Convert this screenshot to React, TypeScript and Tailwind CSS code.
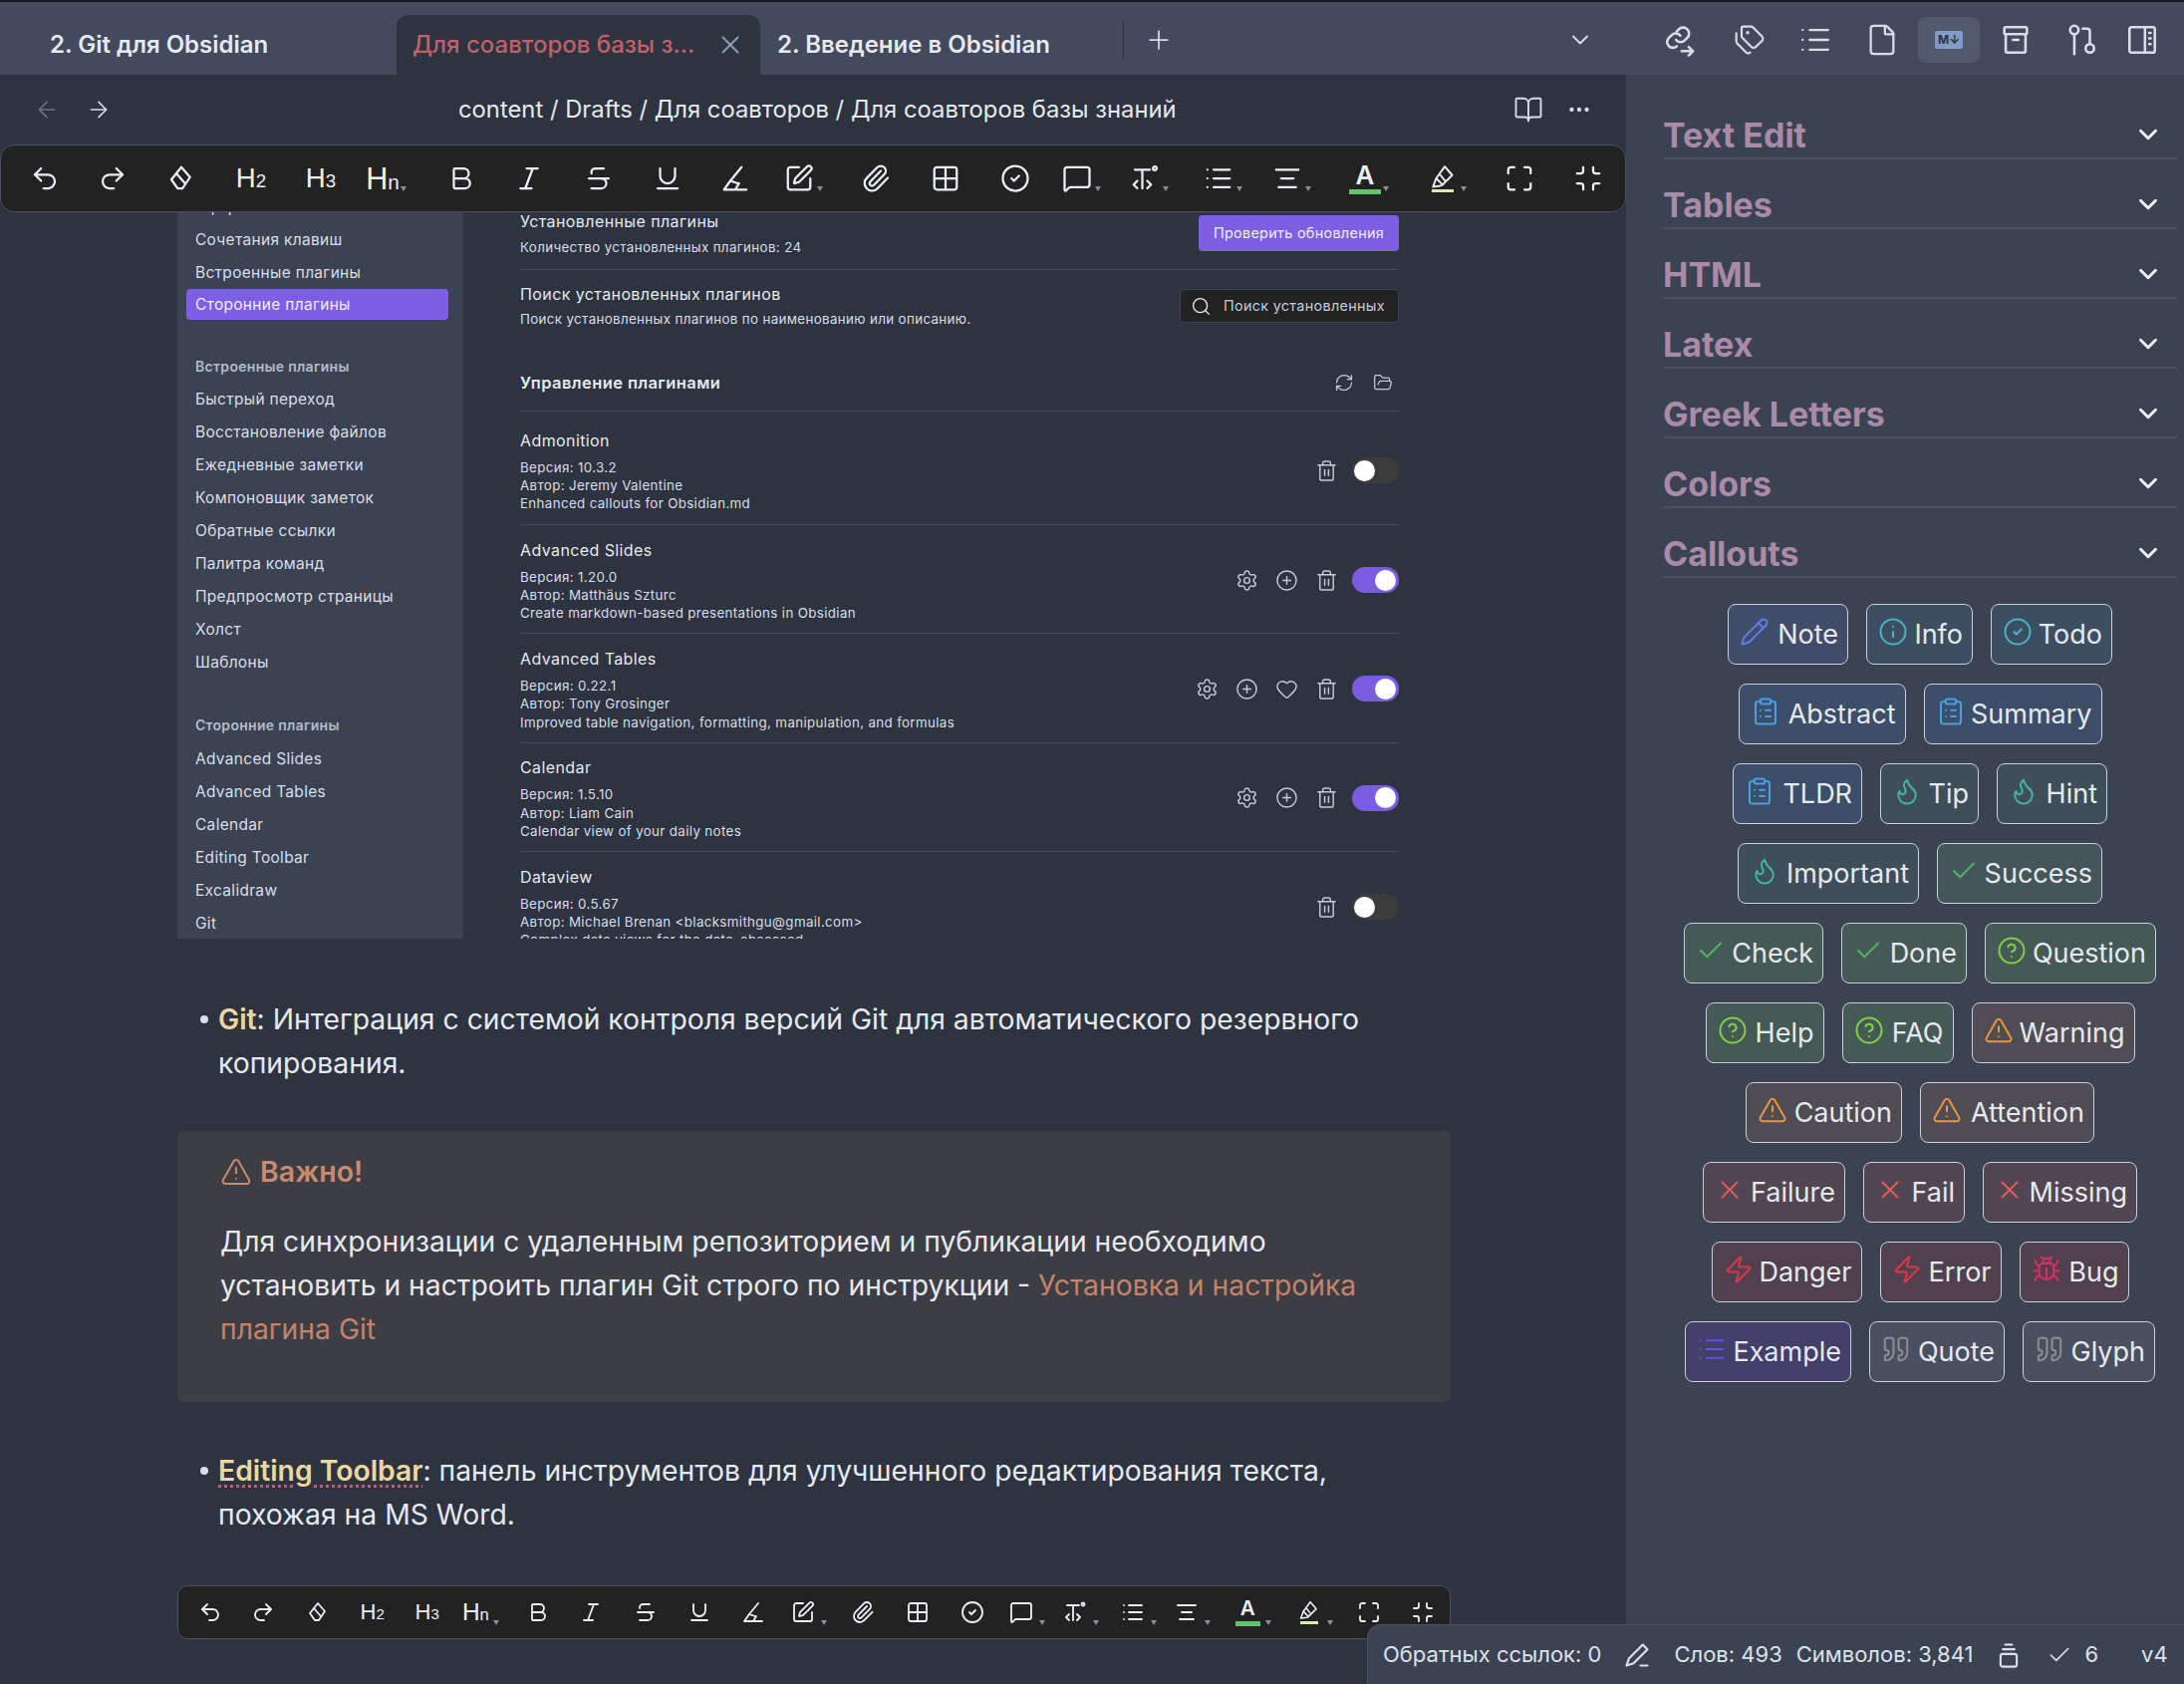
import React, { ReactNode } from "react";
import {
  ArrowLeft, ArrowRight, Bold, Bug, Check, ChevronDown, CircleCheck, CircleHelp, ClipboardList,
  Ellipsis, File, Flame, FolderOpen, Grid2x2, Heart, Info, Italic, BookOpen, List, Maximize, MessageSquare, Minimize,
  Paperclip, Pencil, Plus, Quote, RefreshCw, Redo2, Search, Settings, SquarePen, Strikethrough, Tags,
  Trash2, TriangleAlert, Underline, Undo2, X, Zap, CirclePlus, AlignCenter,
} from "lucide-react";

const Svg = ({ size, children }: { size: number; children: ReactNode }) => (
  <svg width={size} height={size} viewBox="0 0 24 24" fill="none" stroke="currentColor" strokeWidth="1.8" strokeLinecap="round" strokeLinejoin="round" className="shrink-0">
    {children}
  </svg>
);

const EraserIcon = ({ size }: { size: number }) => (
  <Svg size={size}>
    <path d="M12 3l7 8-6 9H9l-5-7z" />
    <path d="M8 8l7 8" />
  </Svg>
);
const InkIcon = ({ size }: { size: number }) => (
  <Svg size={size}>
    <path d="M17 3L8 14" />
    <path d="M8 14l-5 7h9l3-5" />
    <path d="M8 14l6 2" />
    <path d="M13 21h8" />
  </Svg>
);
const FillPenIcon = ({ size }: { size: number }) => (
  <Svg size={size}>
    <path d="M14 2l7 8-9 9-6-6z" />
    <path d="M6 13l-3 8 7-1 2-1" />
    <path d="M10 10l4 5" />
  </Svg>
);
const CodeTextIcon = ({ size }: { size: number }) => (
  <Svg size={size}>
    <path d="M4 5h12M10 5v15" />
    <path d="M6 14l-3 3 3 3M14 14l3 3-3 3" />
    <circle cx="20" cy="4" r="1.5" />
  </Svg>
);
const LinkArrowIcon = ({ size }: { size: number }) => (
  <Svg size={size}>
    <path d="M10 12a4 4 0 0 0 6 .5l2-2a4 4 0 0 0-6-6l-1.5 1.5" />
    <path d="M13 9a4 4 0 0 0-6-.5l-2 2a4 4 0 0 0 5.5 6" />
    <path d="M14 20h8M19 17l3 3-3 3" />
  </Svg>
);
const BoxIcon = ({ size }: { size: number }) => (
  <Svg size={size}>
    <rect x="4" y="3" width="16" height="5" rx="1" />
    <path d="M5 8v12a1 1 0 0 0 1 1h12a1 1 0 0 0 1-1V8" />
    <path d="M10 12h4" />
  </Svg>
);
const BranchIcon = ({ size }: { size: number }) => (
  <Svg size={size}>
    <circle cx="7" cy="5" r="3" />
    <path d="M7 8v14" />
    <path d="M13 4h3a2 2 0 0 1 2 2v9" />
    <circle cx="18" cy="18" r="3" />
  </Svg>
);
const PanelIcon = ({ size }: { size: number }) => (
  <Svg size={size}>
    <rect x="3" y="3" width="18" height="18" rx="1.5" />
    <path d="M14 3v18" />
    <path d="M17 7h1M17 11h1M17 15h1" />
  </Svg>
);
const StackIcon = ({ size }: { size: number }) => (
  <Svg size={size}>
    <path d="M9 3h6M7 7h10" />
    <rect x="5" y="11" width="14" height="11" rx="2" />
  </Svg>
);
const PenStatusIcon = ({ size }: { size: number }) => (
  <Svg size={size}>
    <path d="M17 3l4 4L9 19l-6 2 2-6z" />
    <path d="M15 21h6" />
  </Svg>
);

const Heading = ({ n, size }: { n: string; size: number }) => {
  // H2 / H3 / Hn in the toolbar are plain letters with a small suffix
  return (
    <span className="font-normal text-[#eceff4] leading-none whitespace-nowrap [font-family:'Liberation_Sans',sans-serif]" style={{ fontSize: size }}>
      H<span style={{ fontSize: size * 0.68 }}>{n}</span>
    </span>
  );
};

type ToolItem = { dx: number; caret?: boolean; render: (s: number) => ReactNode };

const toolItems: ToolItem[] = [
  { dx: 0, render: (s) => <Undo2 size={s} strokeWidth={1.8} /> },
  { dx: 68, render: (s) => <Redo2 size={s} strokeWidth={1.8} /> },
  { dx: 69, render: (s) => <EraserIcon size={s} /> },
  { dx: 70, render: (s) => <Heading n="2" size={s * 0.92} /> },
  { dx: 70, render: (s) => <Heading n="3" size={s * 0.92} /> },
  { dx: 62, caret: true, render: (s) => <Heading n="n" size={s * 1.02} /> },
  { dx: 79, render: (s) => <Bold size={s} strokeWidth={1.8} /> },
  { dx: 68, render: (s) => <Italic size={s} strokeWidth={1.8} /> },
  { dx: 70, render: (s) => <Strikethrough size={s} strokeWidth={1.8} /> },
  { dx: 69, render: (s) => <Underline size={s} strokeWidth={1.8} /> },
  { dx: 68, render: (s) => <InkIcon size={s} /> },
  { dx: 64, caret: true, render: (s) => <SquarePen size={s} strokeWidth={1.8} /> },
  { dx: 77, render: (s) => <Paperclip size={s} strokeWidth={1.8} /> },
  { dx: 70, render: (s) => <Grid2x2 size={s} strokeWidth={1.8} /> },
  { dx: 70, render: (s) => <CircleCheck size={s} strokeWidth={1.8} /> },
  { dx: 62, caret: true, render: (s) => <MessageSquare size={s} strokeWidth={1.8} /> },
  { dx: 68, caret: true, render: (s) => <CodeTextIcon size={s} /> },
  { dx: 74, caret: true, render: (s) => <List size={s} strokeWidth={1.8} /> },
  { dx: 69, caret: true, render: (s) => <AlignCenter size={s} strokeWidth={1.8} /> },
  {
    dx: 78,
    caret: true,
    render: (s) => (
      <span className="flex flex-col items-center leading-none">
        <span className="font-semibold text-[#eceff4] leading-none" style={{ fontSize: s * 0.86 }}>A</span>
        <span className="bg-[#5fc46e] mt-[2px] h-[5px]" style={{ width: s * 1.05 }} />
      </span>
    ),
  },
  {
    dx: 78,
    caret: true,
    render: (s) => (
      <span className="flex flex-col items-center">
        <FillPenIcon size={s * 0.86} />
        <span className="bg-[#dcecb0] h-[3px]" style={{ width: s * 0.75 }} />
      </span>
    ),
  },
  { dx: 77, render: (s) => <Maximize size={s} strokeWidth={1.8} /> },
  { dx: 69, render: (s) => <Minimize size={s} strokeWidth={1.8} /> },
];

const Toolbar = ({ scale, iconSize, start, className }: { scale: number; iconSize: number; start: number; className: string }) => (
  <div className={`flex items-center bg-[#222222] border border-[#4a5263] text-[#eceff4] shrink-0 ${className}`} style={{ paddingLeft: start - 21 }}>
    {toolItems.map((it, i) => (
      <div key={i} className="relative w-[40px] h-[36px] flex items-center justify-center shrink-0" style={{ marginLeft: i === 0 ? 0 : it.dx * scale - 40 }}>
        {it.render(iconSize)}
        {it.caret && <span className="absolute right-[-4px] bottom-[5px] w-0 h-0 border-l-[3px] border-r-[3px] border-t-[5px] border-l-transparent border-r-transparent border-t-[#8a8f99]" />}
      </div>
    ))}
  </div>
);

const Tab = ({ text, active }: { text: string; active?: boolean }) =>
  active ? (
    <div className="w-[365px] h-[60px] bg-[#2e3340] rounded-t-[12px] flex items-center pl-[16px] pr-[15px] justify-between">
      <span className="text-[24px] font-medium text-[#bf616a] whitespace-nowrap">{text}</span>
      <X size={30} strokeWidth={1.5} className="text-[#8f9cb5]" />
    </div>
  ) : (
    <div className="h-[60px] flex items-center">
      <span className="text-[24px] font-semibold text-[#e5e9f0] whitespace-nowrap">{text}</span>
    </div>
  );

const TopBar = () => (
  <div className="h-[73px] shrink-0 flex items-end bg-[#434a5b] text-[#d8dee9]">
    <div className="w-[398px] pl-[50px] shrink-0"><Tab text="2. Git для Obsidian" /></div>
    <Tab text="Для соавторов базы з..." active />
    <div className="w-[364px] pl-[17px] shrink-0"><Tab text="2. Введение в Obsidian" /></div>
    <div className="h-[60px] pb-[10px] flex items-center">
      <div className="w-[1px] h-[38px] bg-[#2e3340]" />
      <Plus size={30} strokeWidth={1.4} className="ml-[20px]" />
      <ChevronDown size={28} strokeWidth={1.6} className="ml-[394px]" />
    </div>
    <div className="h-[60px] pb-[10px] flex items-center ml-[68px] text-[#d8dee9]">
      <span className="mr-[38px]"><LinkArrowIcon size={34} /></span>
      <span className="mr-[33px]"><Tags size={32} strokeWidth={1.6} /></span>
      <span className="mr-[33px]"><List size={34} strokeWidth={1.6} /></span>
      <span className="mr-[19px]"><File size={34} strokeWidth={1.6} /></span>
      <div className="w-[62px] h-[46px] mr-[19px] rounded-[8px] bg-[#515a6d] flex items-center justify-center">
        <span className="w-[28px] h-[18px] bg-[#7f9cc9] rounded-[2px] text-[#2e3440] text-[12px] font-bold flex items-center justify-center leading-none">M↓</span>
      </div>
      <span className="mr-[32px]"><BoxIcon size={34} /></span>
      <span className="mr-[27px]"><BranchIcon size={34} /></span>
      <PanelIcon size={34} />
    </div>
  </div>
);

const settingsNav = ["Сочетания клавиш", "Встроенные плагины"];
const coreNav = ["Быстрый переход", "Восстановление файлов", "Ежедневные заметки", "Компоновщик заметок", "Обратные ссылки", "Палитра команд", "Предпросмотр страницы", "Холст", "Шаблоны"];
const pluginNav = ["Advanced Slides", "Advanced Tables", "Calendar", "Editing Toolbar", "Excalidraw", "Git"];

const NavItem = ({ text }: { text: string }) => (
  <div className="h-[33px] pl-[9px] flex items-center text-[15.5px] tracking-[0.3px] text-[#d8dee9] whitespace-nowrap">{text}</div>
);
const NavHead = ({ text }: { text: string }) => (
  <div className="h-[33px] pl-[9px] flex items-center text-[14px] font-semibold tracking-[0.3px] text-[#b4bbc8] whitespace-nowrap">{text}</div>
);

const SettingsNav = () => (
  <div className="w-[287px] shrink-0 bg-[#3b4252] overflow-hidden pl-[9px] pr-[15px]">
    <div className="-mt-[22px]">
      <NavItem text="Оформление" />
    </div>
    {settingsNav.map((t) => <NavItem key={t} text={t} />)}
    <div className="h-[31px] rounded-[4px] bg-[#7f5ee6] pl-[9px] flex items-center text-[15.5px] tracking-[0.3px] text-[#eceff4]">Сторонние плагины</div>
    <div className="mt-[30px]"><NavHead text="Встроенные плагины" /></div>
    {coreNav.map((t) => <NavItem key={t} text={t} />)}
    <div className="mt-[30px] mb-[1px]"><NavHead text="Сторонние плагины" /></div>
    {pluginNav.map((t) => <NavItem key={t} text={t} />)}
  </div>
);

const Toggle = ({ on }: { on: boolean }) =>
  on ? (
    <div className="w-[47px] h-[26px] rounded-full bg-[#7a5ce0] flex items-center justify-end pr-[3px]">
      <div className="w-[21px] h-[21px] rounded-full bg-white" />
    </div>
  ) : (
    <div className="w-[47px] h-[26px] rounded-full bg-[#3c3c3c] flex items-center pl-[2px]">
      <div className="w-[21px] h-[21px] rounded-full bg-white" />
    </div>
  );

type Plugin = { name: string; ver: string; author: string; desc: string; gear?: boolean; heart?: boolean; on: boolean };
const plugins: Plugin[] = [
  { name: "Admonition", ver: "10.3.2", author: "Jeremy Valentine", desc: "Enhanced callouts for Obsidian.md", on: false },
  { name: "Advanced Slides", ver: "1.20.0", author: "Matthäus Szturc", desc: "Create markdown-based presentations in Obsidian", gear: true, on: true },
  { name: "Advanced Tables", ver: "0.22.1", author: "Tony Grosinger", desc: "Improved table navigation, formatting, manipulation, and formulas", gear: true, heart: true, on: true },
  { name: "Calendar", ver: "1.5.10", author: "Liam Cain", desc: "Calendar view of your daily notes", gear: true, on: true },
  { name: "Dataview", ver: "0.5.67", author: "Michael Brenan <blacksmithgu@gmail.com>", desc: "Complex data views for the data-obsessed", on: false },
];

const PluginRow = ({ p, first }: { p: Plugin; first: boolean }) => (
  <div className={`flex items-center justify-between border-b border-[#454c5b] shrink-0 ${first ? "h-[114px] pt-[5px]" : "h-[109.3px] pt-[2px]"}`}>
    <div>
      <div className="text-[16px] leading-[24px] tracking-[0.4px] text-[#e5e9f0]">{p.name}</div>
      <div className="mt-[6px] text-[13.35px] leading-[18.3px] tracking-[0.35px] text-[#d8dee9]">
        <div>Версия: {p.ver}</div>
        <div>Автор: {p.author}</div>
        <div>{p.desc}</div>
      </div>
    </div>
    <div className="flex items-center text-[#c5cad6]">
      {p.gear && <Settings size={23} strokeWidth={1.5} className="mr-[17px]" />}
      {p.gear && <CirclePlus size={23} strokeWidth={1.5} className="mr-[17px]" />}
      {p.heart && <Heart size={23} strokeWidth={1.5} className="mr-[17px]" />}
      <Trash2 size={23} strokeWidth={1.5} className="mr-[14px]" />
      <Toggle on={p.on} />
    </div>
  </div>
);

const SettingsShot = () => (
  <div className="h-[729px] flex overflow-hidden shrink-0">
    <SettingsNav />
    <div className="w-[882px] ml-[57px] overflow-hidden">
      <div className="h-[58px] flex justify-between border-b border-[#454c5b]">
        <div className="-mt-[1px]">
          <div className="text-[16px] leading-[20px] tracking-[0.4px] text-[#e5e9f0]">Установленные плагины</div>
          <div className="mt-[7px] text-[13.35px] leading-[18px] tracking-[0.35px] text-[#d8dee9]">Количество установленных плагинов: 24</div>
        </div>
        <div className="mt-[3px] w-[201px] h-[36px] rounded-[4px] bg-[#7f5ee6] flex items-center justify-center text-[14.4px] tracking-[0.3px] text-[#eceff4]">Проверить обновления</div>
      </div>
      <div className="h-[142px] border-b border-[#454c5b]">
        <div className="flex justify-between pt-[12px]">
          <div>
            <div className="text-[16px] leading-[24px] tracking-[0.4px] text-[#e5e9f0]">Поиск установленных плагинов</div>
            <div className="mt-[4px] text-[13.35px] leading-[18px] tracking-[0.35px] text-[#d8dee9]">Поиск установленных плагинов по наименованию или описанию.</div>
          </div>
          <div className="mt-[7px] w-[220px] h-[34px] rounded-[5px] bg-[#222222] border border-[#3b4252] flex items-center pl-[10px] gap-[12px] text-[14.4px] tracking-[0.3px] text-[#c5cad6]">
            <Search size={21} strokeWidth={1.5} className="text-[#e5e9f0]" />
            Поиск установленных
          </div>
        </div>
        <div className="flex justify-between items-center mt-[43px]">
          <div className="text-[16.5px] font-semibold tracking-[0.4px] text-[#e5e9f0]">Управление плагинами</div>
          <div className="flex gap-[19px] pr-[6px] text-[#c5cad6]">
            <RefreshCw size={20} strokeWidth={1.5} />
            <FolderOpen size={20} strokeWidth={1.5} />
          </div>
        </div>
      </div>
      {plugins.map((p, i) => <PluginRow key={p.name} p={p} first={i === 0} />)}
    </div>
  </div>
);

const Bullet = ({ children, className }: { children: ReactNode; className: string }) => (
  <div className={`flex pr-[20px] text-[28.3px] leading-[44px] text-[#e5e9f0] ${className}`}>
    <div className="w-[41px] h-[44px] shrink-0 flex items-center justify-end pr-[10px]">
      <div className="w-[8px] h-[8px] rounded-full bg-[#d8dee9]" />
    </div>
    <div>{children}</div>
  </div>
);

const Note = () => (
  <div className="mt-[46px] h-[272px] rounded-[6px] bg-[#3d3d44] pl-[43px] pr-[60px] pt-[19px] shrink-0">
    <div className="flex items-center gap-[8px] h-[44px] text-[#c98a6f]">
      <TriangleAlert size={32} strokeWidth={1.5} />
      <span className="text-[28.5px] font-semibold">Важно!</span>
    </div>
    <div className="mt-[26px] text-[28.3px] leading-[44px] text-[#e5e9f0]">
      Для синхронизации с удаленным репозиторием и публикации необходимо установить и настроить плагин Git строго по инструкции -{" "}
      <span className="text-[#c4836b]">Установка и настройка плагина Git</span>
    </div>
  </div>
);

const Editor = () => (
  <div className="w-[1632px] shrink-0 flex flex-col bg-[#2e3340]">
    <div className="h-[70px] shrink-0 flex items-center text-[#d8dee9]">
      <ArrowLeft size={26} strokeWidth={1.5} className="ml-[34px] text-[#6c7485]" />
      <ArrowRight size={26} strokeWidth={1.5} className="ml-[26px]" />
      <div className="ml-[348px] text-[23.8px] whitespace-pre text-[#e5e9f0]">content / Drafts / Для соавторов / Для соавторов базы знаний</div>
      <BookOpen size={30} strokeWidth={1.5} className="ml-[338px]" />
      <Ellipsis size={26} strokeWidth={2} className="ml-[23px]" />
    </div>
    <Toolbar scale={1} iconSize={30} start={45} className="h-[68px] w-[1632px] rounded-[14px]" />
    <div className="pl-[178px] w-[1456px] flex flex-col">
      <SettingsShot />
      <Bullet className="mt-[59px]">
        <span className="font-semibold text-[#ebd89f]">Git</span>: Интеграция с системой контроля версий Git для автоматического резервного копирования.
      </Bullet>
      <Note />
      <Bullet className="mt-[47px]">
        <span className="font-semibold text-[#ebd89f] underline decoration-dotted decoration-[#bf616a] underline-offset-4">Editing Toolbar</span>: панель инструментов для улучшенного редактирования текста, похожая на MS Word.
      </Bullet>
      <Toolbar scale={0.786} iconSize={24} start={33} className="mt-[49px] h-[54px] rounded-[10px]" />
    </div>
  </div>
);

const sections = ["Text Edit", "Tables", "HTML", "Latex", "Greek Letters", "Colors", "Callouts"];

type Callout = { label: string; w: string; bg: string; color: string; icon: (s: number) => ReactNode };

const ic = (I: typeof Check) => (s: number) => <I size={s} strokeWidth={1.6} />;

const rows: Callout[][] = [
  [
    { label: "Note", w: "w-[121px]", bg: "bg-[#414c69]", color: "text-[#5a7fe3]", icon: ic(Pencil) },
    { label: "Info", w: "w-[107px]", bg: "bg-[#3c4e62]", color: "text-[#4bb3c4]", icon: ic(Info) },
    { label: "Todo", w: "w-[122px]", bg: "bg-[#3c4e62]", color: "text-[#4bb3c4]", icon: ic(CircleCheck) },
  ],
  [
    { label: "Abstract", w: "w-[168px]", bg: "bg-[#3d4e69]", color: "text-[#4a9ee8]", icon: ic(ClipboardList) },
    { label: "Summary", w: "w-[179px]", bg: "bg-[#3d4e69]", color: "text-[#4a9ee8]", icon: ic(ClipboardList) },
  ],
  [
    { label: "TLDR", w: "w-[130px]", bg: "bg-[#3d4e69]", color: "text-[#4a9ee8]", icon: ic(ClipboardList) },
    { label: "Tip", w: "w-[99px]", bg: "bg-[#3f4f5a]", color: "text-[#45b39d]", icon: ic(Flame) },
    { label: "Hint", w: "w-[111px]", bg: "bg-[#3f4f5a]", color: "text-[#45b39d]", icon: ic(Flame) },
  ],
  [
    { label: "Important", w: "w-[182px]", bg: "bg-[#3f4f5a]", color: "text-[#45b39d]", icon: ic(Flame) },
    { label: "Success", w: "w-[166px]", bg: "bg-[#44565a]", color: "text-[#4cb562]", icon: ic(Check) },
  ],
  [
    { label: "Check", w: "w-[140px]", bg: "bg-[#465a55]", color: "text-[#4cb562]", icon: ic(Check) },
    { label: "Done", w: "w-[126px]", bg: "bg-[#465a55]", color: "text-[#4cb562]", icon: ic(Check) },
    { label: "Question", w: "w-[172px]", bg: "bg-[#465a55]", color: "text-[#7fd04a]", icon: ic(CircleHelp) },
  ],
  [
    { label: "Help", w: "w-[119px]", bg: "bg-[#465a55]", color: "text-[#7fd04a]", icon: ic(CircleHelp) },
    { label: "FAQ", w: "w-[112px]", bg: "bg-[#465a55]", color: "text-[#7fd04a]", icon: ic(CircleHelp) },
    { label: "Warning", w: "w-[164px]", bg: "bg-[#4f4c53]", color: "text-[#e8963a]", icon: ic(TriangleAlert) },
  ],
  [
    { label: "Caution", w: "w-[157px]", bg: "bg-[#4f4c53]", color: "text-[#e8963a]", icon: ic(TriangleAlert) },
    { label: "Attention", w: "w-[175px]", bg: "bg-[#4f4c53]", color: "text-[#e8963a]", icon: ic(TriangleAlert) },
  ],
  [
    { label: "Failure", w: "w-[143px]", bg: "bg-[#514651]", color: "text-[#e55c56]", icon: ic(X) },
    { label: "Fail", w: "w-[102px]", bg: "bg-[#514651]", color: "text-[#e55c56]", icon: ic(X) },
    { label: "Missing", w: "w-[155px]", bg: "bg-[#514651]", color: "text-[#e55c56]", icon: ic(X) },
  ],
  [
    { label: "Danger", w: "w-[151px]", bg: "bg-[#51414f]", color: "text-[#e0354a]", icon: ic(Zap) },
    { label: "Error", w: "w-[122px]", bg: "bg-[#51414f]", color: "text-[#e0354a]", icon: ic(Zap) },
    { label: "Bug", w: "w-[110px]", bg: "bg-[#51414f]", color: "text-[#e02d62]", icon: ic(Bug) },
  ],
  [
    { label: "Example", w: "w-[167px]", bg: "bg-[#423f6b]", color: "text-[#6a4fe0]", icon: ic(List) },
    { label: "Quote", w: "w-[136px]", bg: "bg-[#4a5060]", color: "text-[#8a8f92]", icon: ic(Quote) },
    { label: "Glyph", w: "w-[133px]", bg: "bg-[#4a5060]", color: "text-[#8a8f92]", icon: ic(Quote) },
  ],
];

const CalloutButton = ({ c }: { c: Callout }) => (
  <div className={`h-[61px] ${c.w} ${c.bg} rounded-[8px] border border-[#c9d0dc] flex items-center justify-between pl-[11px] pr-[9px]`}>
    <span className={`${c.color} mb-[6px]`}>{c.icon(30)}</span>
    <span className="text-[27px] text-[#e5e9f0] leading-none">{c.label}</span>
  </div>
);

const SidePanel = () => (
  <div className="flex-1 bg-[#3b4252] pl-[37px] pr-[7px] pt-[25px]">
    {sections.map((s) => (
      <div key={s} className="h-[70px] flex items-start">
        <div className="w-full h-[60px] pt-[12px] flex items-center justify-between border-b-2 border-[#4a5163] pr-[14px]">
          <span className="text-[34px] font-bold text-[#a98ba8]">{s}</span>
          <ChevronDown size={30} strokeWidth={2.4} className="text-[#eceff4]" />
        </div>
      </div>
    ))}
    <div className="mt-[16px] -ml-[37px] -mr-[7px] pl-[30px] flex flex-col gap-[19px]">
      {rows.map((r, i) => (
        <div key={i} className="flex justify-center gap-[18px]">
          {r.map((c) => <CalloutButton key={c.label} c={c} />)}
        </div>
      ))}
    </div>
  </div>
);

const StatusBar = () => (
  <div className="absolute right-0 bottom-0 w-[820px] h-[60px] rounded-tl-[14px] bg-[#3b4252] border-t border-l border-[#4a5163] flex items-center pl-[15px] text-[22px] text-[#dde2ec] whitespace-nowrap">
    <span>Обратных ссылок: 0</span>
    <span className="ml-[22px]"><PenStatusIcon size={28} /></span>
    <span className="ml-[23px]">Слов: 493</span>
    <span className="ml-[14px]">Символов: 3,841</span>
    <span className="ml-[22px]"><StackIcon size={28} /></span>
    <Check size={26} strokeWidth={1.5} className="ml-[24px] shrink-0" />
    <span className="ml-[12px]">6</span>
    <span className="ml-[43px]">v4</span>
  </div>
);

export default function App() {
  return (
    <div className="relative w-[2192px] h-[1690px] overflow-hidden flex flex-col bg-[#2e3340] [font-family:Inter,sans-serif]">
      <div className="h-[2px] bg-[#15171c] shrink-0" />
      <TopBar />
      <div className="flex flex-1 min-h-0">
        <Editor />
        <SidePanel />
      </div>
      <StatusBar />
    </div>
  );
}
